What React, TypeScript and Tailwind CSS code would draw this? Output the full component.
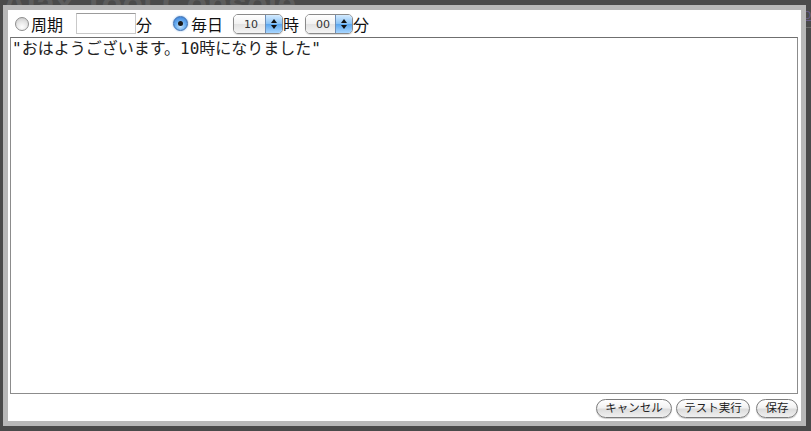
import React from 'react';

const jp = { fontFamily: '"Noto Sans CJK JP", "DejaVu Sans", sans-serif' };
const mono = { fontFamily: '"DejaVu Sans Mono", "Noto Sans CJK JP", monospace' };

const Radio: React.FC<{ checked?: boolean }> = ({ checked }) =>
  checked ? (
    <span className="w-[15px] h-[15px] rounded-full border border-[#3d6fb0] bg-[radial-gradient(circle_at_50%_70%,#c9e6ff_0%,#6aaef0_45%,#2f76d4_100%)] shadow-[0_0_2px_#7fb4ee] flex items-center justify-center shrink-0">
      <span className="w-[5px] h-[5px] rounded-full bg-[#1a1a1a]" />
    </span>
  ) : (
    <span className="block w-[14px] h-[14px] rounded-full border border-[#8e8e8e] bg-[radial-gradient(circle_at_50%_75%,#ffffff_0%,#e6e6e6_50%,#c4c4c4_100%)] shrink-0" />
  );

const Popup: React.FC<{ value: string; width: string }> = ({ value, width }) => (
  <div className={`${width} h-[20px] rounded-[5px] border border-[#8a8a8a] flex overflow-hidden shadow-[0_1px_1px_rgba(0,0,0,0.15)]`}>
    <div className="flex-1 bg-[linear-gradient(#ffffff,#f1f1f1_50%,#e2e2e2_51%,#f4f4f4)] text-[11px] leading-[18px] pt-[1px] text-[#333] pl-[10px]" style={{ fontFamily: '"DejaVu Sans", sans-serif' }}>
      {value}
    </div>
    <div className="w-[17px] bg-[linear-gradient(#d4ebff,#86c1f6_50%,#5aa6ee_51%,#a9d6ff)] border-l border-[#6d8fb8] flex flex-col items-center justify-center gap-[2px]">
      <svg width="6" height="4" viewBox="0 0 6 4"><path d="M0 4L3 0L6 4Z" fill="#111" /></svg>
      <svg width="6" height="4" viewBox="0 0 6 4"><path d="M0 0L3 4L6 0Z" fill="#111" /></svg>
    </div>
  </div>
);

const AquaButton: React.FC<{ label: string; width: string }> = ({ label, width }) => (
  <button className={`${width} h-[19px] rounded-full border border-[#7c7c7c] bg-[linear-gradient(#ffffff,#f2f2f2_45%,#dcdcdc_55%,#f0f0f0)] text-[11.5px] leading-none text-[#222] flex items-center justify-center shadow-[0_1px_1px_rgba(0,0,0,0.2)]`} style={jp}>
    {label}
  </button>
);

export default function App() {
  return (
    <div className="relative w-[811px] h-[431px] bg-[#4a4a4a] overflow-hidden">
      {/* page content behind the modal */}
      <div className="absolute left-[2px] top-[-22px] text-[34px] font-bold text-[#5c5c5c]" style={{ fontFamily: '"Liberation Sans", sans-serif' }}>
        Ajax Tool Console
      </div>
      <div className="absolute left-[804px] top-[8px] text-[10px] text-[#6a5f8a] underline" style={{ fontFamily: '"Liberation Sans", sans-serif' }}>
        D
      </div>
      <div className="absolute left-[804px] top-[27px] w-[10px] h-px bg-[#6a6a6a]" />

      {/* modal dialog */}
      <div className="absolute left-[3px] top-[5px] w-[803px] h-[421px] border-[5px] border-[#b8b8b8] bg-white flex flex-col" style={jp}>
        <div className="h-[27px] flex items-center text-[16px] text-[#111] shrink-0">
          <span className="ml-[7px]"><Radio /></span>
          <span className="ml-[2px]">周期</span>
          <div className="ml-[13px] w-[60px] h-[21px] border border-[#c9c9c9] border-t-[#9c9c9c]" />
          <span>分</span>
          <span className="ml-[21px]"><Radio checked /></span>
          <span className="ml-[3px]">毎日</span>
          <span className="ml-[10px]"><Popup value="10" width="w-[50px]" /></span>
          <span>時</span>
          <span className="ml-[6px]"><Popup value="00" width="w-[48px]" /></span>
          <span>分</span>
        </div>
        <div className="ml-[2px] mr-[3px] h-[357px] border border-[#8c8c8c] border-t-[#6f6f6f] px-[1px] pt-[1px] text-[16px] leading-[20px] text-[#222]" style={mono}>
          "おはようございます。10時になりました"
        </div>
        <div className="flex-1 flex items-center justify-end gap-[4px] pr-[3px] pt-[1px]">
          <AquaButton label="キャンセル" width="w-[76px]" />
          <AquaButton label="テスト実行" width="w-[74px]" />
          <span className="ml-[2px]"><AquaButton label="保存" width="w-[42px]" /></span>
        </div>
      </div>
    </div>
  );
}
